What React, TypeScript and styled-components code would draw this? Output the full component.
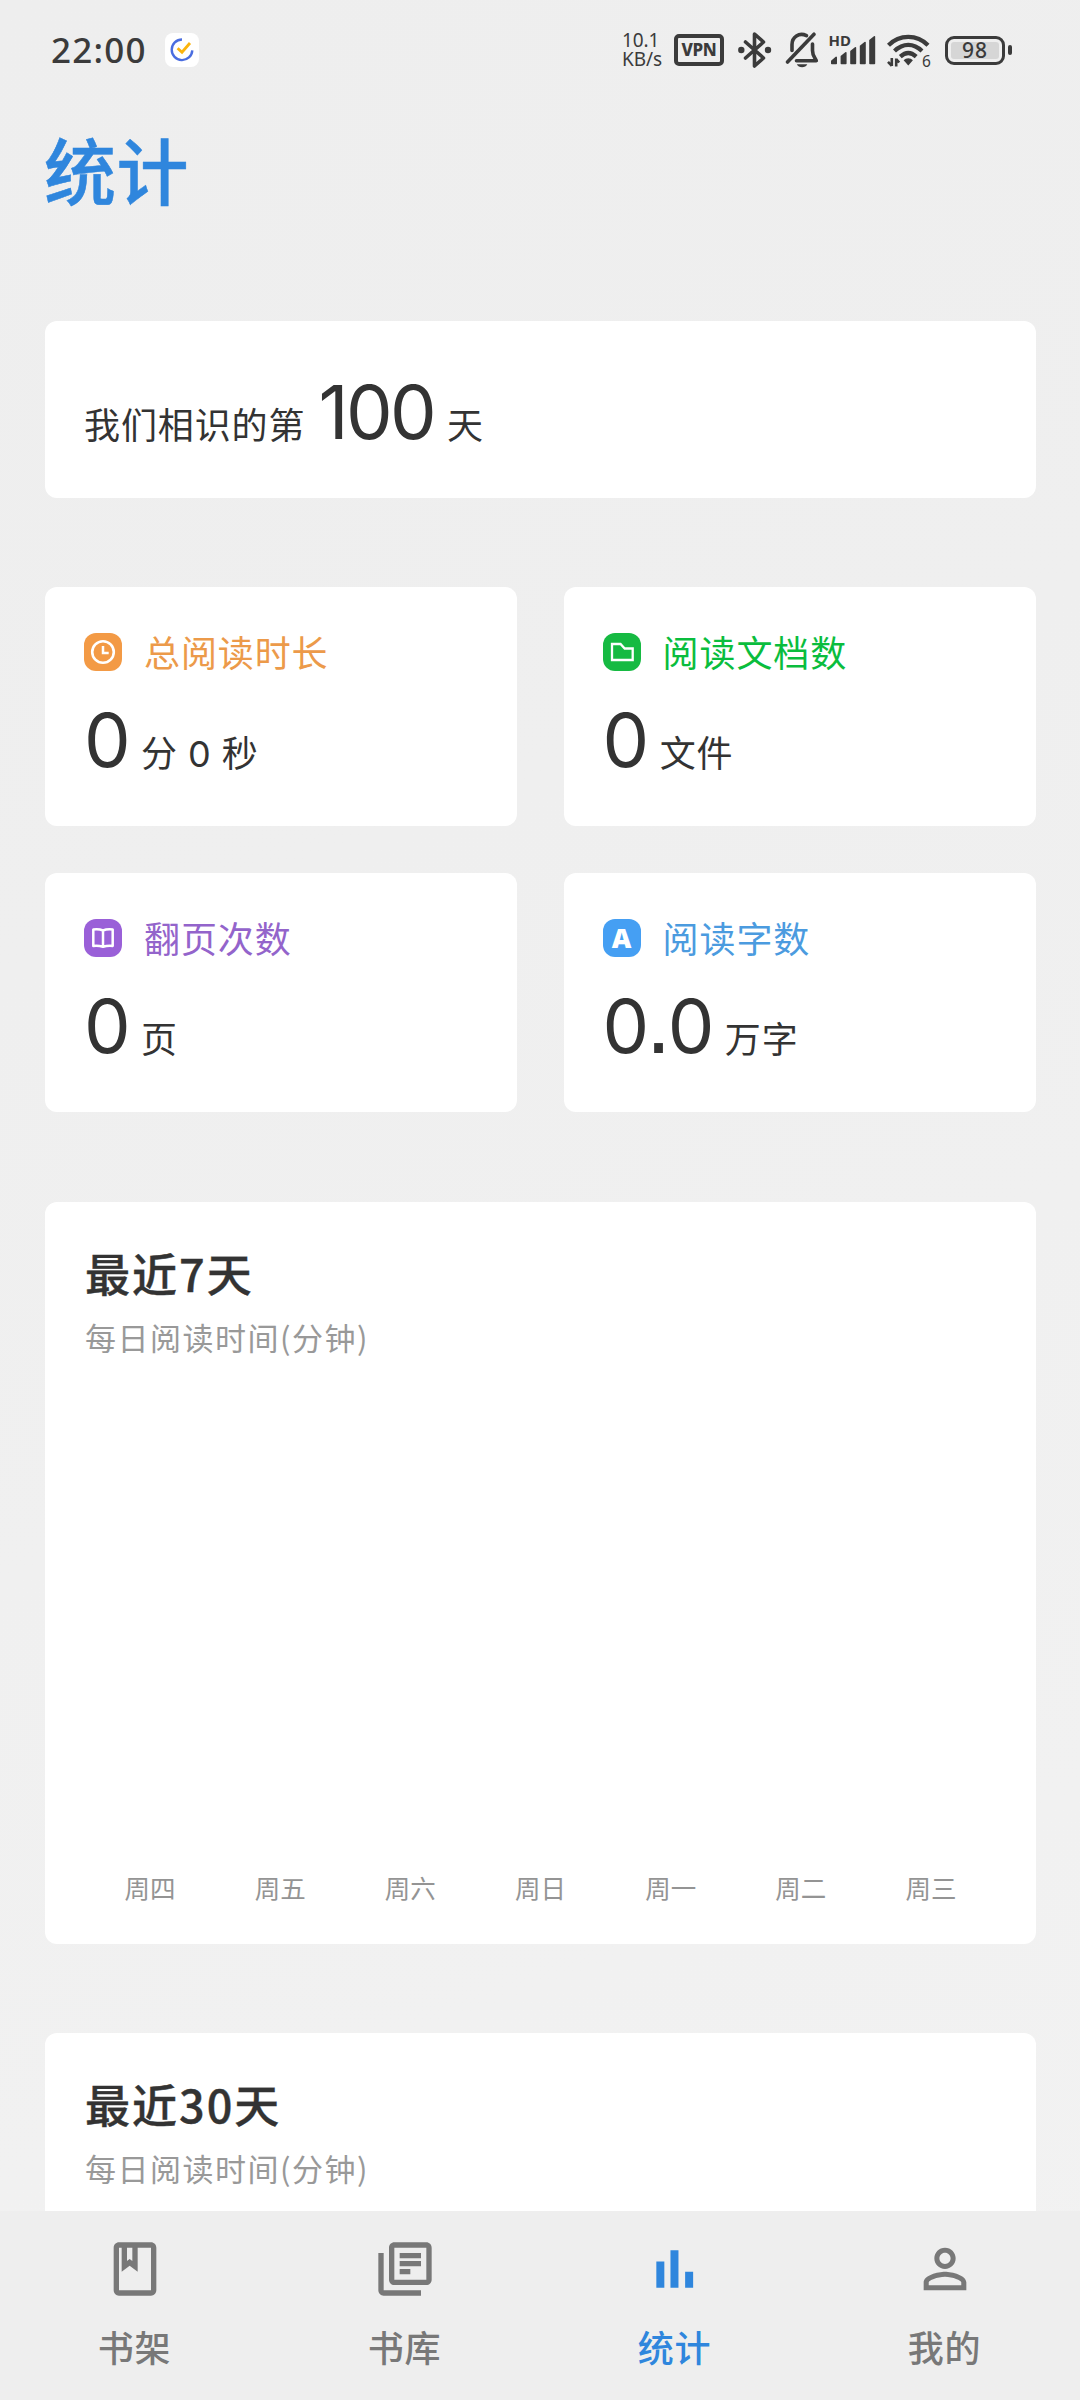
import React from "react";
import styled, { createGlobalStyle } from "styled-components";

const CJK = `"Noto Sans CJK SC", sans-serif`;
const LATIN = `"Noto Sans", "Noto Sans CJK SC", sans-serif`;
const NUMERIC = `Inter, "Noto Sans", sans-serif`;
const INK = "#3b3b3b";

const GlobalStyle = createGlobalStyle`
  *, *::before, *::after { box-sizing: border-box; }
  html, body { margin: 0; padding: 0; }
  body { width: 1080px; height: 2400px; overflow: hidden; }
  svg { display: block; flex: none; }
`;

const Screen = styled.div`
  width: 1080px;
  height: 2400px;
  display: flex;
  flex-direction: column;
  overflow: hidden;
  background: linear-gradient(160deg, #eeeeee 0%, #efefef 35%, #f2f2f2 100%);
  font-family: ${CJK};
  color: #333;
`;

const StatusBar = styled.header`
  flex: none;
  height: 100px;
  padding: 0 68px 0 51px;
  display: flex;
  align-items: center;
  justify-content: space-between;
  font-family: ${LATIN};
  color: ${INK};
`;

const StatusGroup = styled.div<{ $gap: number }>`
  display: flex;
  align-items: center;
  gap: ${(p) => p.$gap}px;
`;

const Clock = styled.span`
  width: 96px;
  font-size: 35px;
  line-height: 36px;
  font-weight: 500;
  letter-spacing: 1.2px;
  white-space: nowrap;
`;

const Speed = styled.div`
  width: 42px;
  display: flex;
  flex-direction: column;
  font-size: 19px;
  line-height: 18.6px;
  letter-spacing: -0.1px;
  white-space: nowrap;
`;

const VpnBadge = styled.span`
  width: 50px;
  height: 32px;
  margin-left: 10px;
  border: 4px solid ${INK};
  border-radius: 5px;
  display: flex;
  align-items: center;
  justify-content: center;
  font-size: 17px;
  line-height: 24px;
  font-weight: 800;
  letter-spacing: -0.3px;
`;

const StatusIcon = styled.svg<{ $left: number }>`
  margin-left: ${(p) => p.$left}px;
  overflow: visible;
`;

const Battery = styled.span`
  width: 60px;
  height: 29px;
  margin-left: 13px;
  padding: 3px;
  border: 3px solid ${INK};
  border-radius: 9px;
  display: flex;
`;

const BatteryLevel = styled.span`
  flex: 1;
  display: flex;
  align-items: center;
  justify-content: center;
  border-radius: 3px;
  background: #d6d6d6;
  font-size: 21px;
  line-height: 17px;
  font-weight: 500;
  letter-spacing: 1px;
`;

const BatteryNub = styled.span`
  width: 4px;
  height: 10px;
  margin-left: 3px;
  border-radius: 2px;
  background: ${INK};
`;

const Content = styled.main`
  flex: 1;
  min-height: 0;
  overflow: hidden;
  padding: 18px 44px 0 45px;
  display: flex;
  flex-direction: column;
`;

const Title = styled.h1`
  margin: 0 0 103px -1px;
  flex: none;
  font-size: 72px;
  line-height: 100px;
  font-weight: 500;
  letter-spacing: 0.6px;
  color: #2f86dd;
  -webkit-text-stroke: 0.5px #2f86dd;
`;

const Card = styled.section`
  flex: none;
  border-radius: 12px;
  background: #fff;
`;

const DaysCard = styled(Card)`
  height: 177px;
  padding: 51px 39px 0;
`;

const StatGrid = styled.div`
  flex: none;
  margin: 89px 0 90px;
  display: grid;
  grid-template-columns: 472px 1fr;
  grid-auto-rows: 239px;
  gap: 47px 46.600px;
`;

const StatCard = styled(Card)`
  padding: 46px 39px 0;
`;

const StatHead = styled.div<{ $color: string }>`
  height: 38px;
  margin-bottom: 29px;
  display: flex;
  gap: 22px;
  font-size: 36px;
  line-height: 36px;
  letter-spacing: 0.9px;
  color: ${(p) => p.$color};
`;

const ValueRow = styled.div`
  height: 80px;
  display: flex;
  align-items: baseline;
  font-size: 36px;
  line-height: 80px;
  letter-spacing: 0.9px;
  white-space: pre;
`;

const Big = styled.span<{ $left?: number; $right?: number }>`
  margin-left: ${(p) => p.$left ?? 0}px;
  margin-right: ${(p) => p.$right ?? 13}px;
  font-family: ${NUMERIC};
  font-size: 74px;
  letter-spacing: -2.600px;
`;

const Point = styled.span`
  margin: 0 -1px;
  font-family: "Liberation Sans", sans-serif;
  font-size: 92px;
  line-height: 0;
`;

const Small = styled.span`
  margin: 0 11px 0 10px;
  font-family: ${NUMERIC};
  letter-spacing: 0;
`;

const ChartCard = styled(Card)`
  height: 742px;
  margin-bottom: 89px;
  padding: 41px 40px 37px;
  display: flex;
  flex-direction: column;
`;

const ChartTitle = styled.h2`
  margin: 0 0 14px;
  font-size: 45px;
  line-height: 60px;
  font-weight: 500;
  letter-spacing: 2px;
  -webkit-text-stroke: 0.4px #333;
`;

const ChartNote = styled.p`
  margin: 0;
  font-size: 31px;
  line-height: 40px;
  letter-spacing: 1.5px;
  color: #999;
`;

const Plot = styled.div`
  flex: 1;
`;

const Axis = styled.div`
  display: grid;
  grid-template-columns: repeat(7, 1fr);
  font-size: 25.5px;
  line-height: 40px;
  text-align: center;
  color: #949494;
`;

const Nav = styled.nav`
  flex: none;
  height: 189px;
  display: grid;
  grid-template-columns: repeat(4, 1fr);
  background: #eeeeee;
`;

const NavItem = styled.a<{ $active?: boolean }>`
  padding-top: 26px;
  display: flex;
  flex-direction: column;
  align-items: center;
  gap: 25px;
  font-size: 36px;
  line-height: 40px;
  font-weight: 500;
  letter-spacing: 0.8px;
  color: ${(p) => (p.$active ? "#2f86dd" : "#787878")};
`;

const NavLabel = styled.span`
  margin-right: 1px;
`;

const AppIcon = () => (
  <svg width="34" height="34" viewBox="0 0 34 34" fill="none">
    <rect width="34" height="34" rx="8" fill="#fff" />
    <path d="M17 6.500A10.300 10.300 0 1 0 27.300 17.400" stroke="#4a6de0" strokeWidth="2.400" />
    <path d="M12.600 15.200l4.400 4 8-9.200" stroke="#fbb40d" strokeWidth="2.800" />
  </svg>
);

const Bluetooth = () => (
  <StatusIcon $left={13} width="36" height="38" viewBox="0 0 36 38" fill="none" stroke={INK} strokeWidth="3.600" strokeLinejoin="round" strokeLinecap="round">
    <path d="M8.500 11l18 16-9 8V3l9 8L8.500 27" />
    <circle cx="4.300" cy="19" r="3.200" fill={INK} stroke="none" />
    <circle cx="31" cy="19" r="3.200" fill={INK} stroke="none" />
  </StatusIcon>
);

const MutedBell = () => (
  <StatusIcon $left={11} width="36" height="38" viewBox="0 0 36 38" fill="none" stroke={INK} strokeWidth="3.600" strokeLinecap="round" strokeLinejoin="round">
    <path d="M3.500 31L30 3.200" />
    <path d="M22.500 4.600C15 1 8 6 8 13.500V19.500" />
    <path d="M28.500 13V19.500c0 5.500 2.500 7 3.800 10.200H12.500" />
    <path d="M12.800 33.300h10.500c-1.500 4-9 4-10.500 0z" fill={INK} stroke="none" />
  </StatusIcon>
);

const HdSignal = () => (
  <StatusIcon $left={8} width="49" height="42" viewBox="0 -4 49 42" fill={INK} stroke={INK} strokeWidth="1.600" strokeLinejoin="round">
    <text x="0.500" y="12.500" fontSize="15" fontWeight="700" stroke="none">HD</text>
    <path d="M3.800 28l4.400-3.600V30.500H3.800z" />
    <path d="M13.400 23.400l4.400-3.600V30.500h-4.400z" />
    <path d="M23 18.400l4.400-3.600V30.500H23z" />
    <path d="M32.600 13.200l4.400-3.600V30.500h-4.400z" />
    <path d="M42 7.400l4.400-3.600V30.500H42z" />
  </StatusIcon>
);

const Wifi = () => (
  <StatusIcon $left={9} width="46" height="42" viewBox="0 -3 46 42" fill="none" stroke={INK} strokeWidth="4.200">
    <path d="M2.500 13.200C13.500 2 31 2 42 13.200" />
    <path d="M8.500 19C17 10.800 27.500 10.800 36 19" />
    <path d="M14.300 24.600C19.500 19.800 25 19.800 30.200 24.600" />
    <path d="M17.600 28.200c2.500-2.700 6.800-2.700 9.300 0L22.300 33.500z" fill={INK} stroke="none" />
    <path d="M5.800 26v8M10.200 34.500v-8M2 29.800l3.800 4M10.200 27l3 3.500" strokeWidth="2.600" />
    <text x="36" y="34.500" fontSize="15.500" fill={INK} stroke="none">6</text>
  </StatusIcon>
);

const ClockIcon = () => (
  <svg width="38" height="38" viewBox="0 0 38 38" fill="none">
    <rect width="38" height="38" rx="12" fill="#f39a45" />
    <circle cx="19" cy="19" r="10.800" stroke="#fff" strokeWidth="2.600" />
    <path d="M19 13v7h5.700" stroke="#fff" strokeWidth="2.500" />
  </svg>
);

const FolderIcon = () => (
  <svg width="38" height="38" viewBox="0 0 38 38" fill="none">
    <rect width="38" height="38" rx="12" fill="#16ba42" />
    <path d="M9 11h8.500l4.200 4.500h8V27H9z" stroke="#fff" strokeWidth="2.300" />
  </svg>
);

const BookIcon = () => (
  <svg width="38" height="38" viewBox="0 0 38 38" fill="none">
    <rect width="38" height="38" rx="12" fill="#9a60d8" />
    <path d="M19 11.500c-3-1.400-6.500-1.500-9.700-1.100v16.500c3.200-.3 6.700-.1 9.700.9 3-1 6.500-1.200 9.700-.9V10.400c-3.200-.4-6.700-.3-9.700 1.100zM19 11.500v16" stroke="#fff" strokeWidth="2.500" strokeLinejoin="round" />
  </svg>
);

const LetterTile = styled.span`
  flex: none;
  width: 38px;
  height: 38px;
  border-radius: 12px;
  background: #459ff3;
  color: #fff;
  font-family: "Open Sans", "Noto Sans", sans-serif;
  font-size: 27px;
  font-weight: 800;
  line-height: 37px;
  letter-spacing: 0;
  text-align: center;
`;

const stats = [
  { icon: <ClockIcon />, label: "总阅读时长", color: "#ec9a4a", value: "0", unit: "分", extra: "0", extraUnit: "秒" },
  { icon: <FolderIcon />, label: "阅读文档数", color: "#0abd3d", value: "0", unit: "文件" },
  { icon: <BookIcon />, label: "翻页次数", color: "#9364cb", value: "0", unit: "页" },
  { icon: <LetterTile>A</LetterTile>, label: "阅读字数", color: "#4b9bdf", value: "0.0", unit: "万字" },
];

const weekdays = ["周四", "周五", "周六", "周日", "周一", "周二", "周三"];

const tabs = [
  {
    label: "书架",
    path: "M18 2H6c-1.100 0-2 .9-2 2v16c0 1.100.9 2 2 2h12c1.100 0 2-.9 2-2V4c0-1.100-.9-2-2-2zM9 4h2v5l-1-.75L9 9V4zm9 16H6V4h1v9l3-2.250L13 13V4h5v16z",
  },
  {
    label: "书库",
    path: "M4 6H2v14c0 1.100.9 2 2 2h14v-2H4V6zm16-4H8c-1.100 0-2 .9-2 2v12c0 1.100.9 2 2 2h12c1.100 0 2-.9 2-2V4c0-1.100-.9-2-2-2zm0 14H8V4h12v12zM10 9h8v2h-8zm0 3h4v2h-4zm0-6h8v2h-8z",
  },
  { label: "统计", active: true, path: "M5 9.200h3V19H5zM10.300 5h3v14h-3zm5.500 8h3v6h-3z" },
  {
    label: "我的",
    path: "M12 5.900c1.160 0 2.100.94 2.100 2.100s-.94 2.100-2.100 2.100S9.900 9.160 9.900 8s.94-2.100 2.100-2.100m0 9c2.970 0 6.100 1.460 6.100 2.100v1.100H5.900V17c0-.64 3.130-2.100 6.100-2.100M12 4C9.790 4 8 5.790 8 8s1.790 4 4 4 4-1.790 4-4-1.790-4-4-4zm0 9c-2.670 0-8 1.340-8 4v3h16v-3c0-2.660-5.330-4-8-4z",
  },
];

const BigNumber = ({ value }: { value: string }) => {
  const [whole, fraction] = value.split(".");
  return (
    <Big>
      {whole}
      {fraction !== undefined && <Point>.</Point>}
      {fraction}
    </Big>
  );
};

export default function App() {
  return (
    <>
      <GlobalStyle />
      <Screen>
        <StatusBar>
          <StatusGroup $gap={18}>
            <Clock>22:00</Clock>
            <AppIcon />
          </StatusGroup>
          <StatusGroup $gap={0}>
            <Speed>
              <span>10.1</span>
              <span>KB/s</span>
            </Speed>
            <VpnBadge>VPN</VpnBadge>
            <Bluetooth />
            <MutedBell />
            <HdSignal />
            <Wifi />
            <Battery>
              <BatteryLevel>98</BatteryLevel>
            </Battery>
            <BatteryNub />
          </StatusGroup>
        </StatusBar>

        <Content>
          <Title>统计</Title>

          <DaysCard>
            <ValueRow>
              我们相识的第
              <Big $left={13}>100</Big>
              天
            </ValueRow>
          </DaysCard>

          <StatGrid>
            {stats.map((s) => (
              <StatCard key={s.label}>
                <StatHead $color={s.color}>
                  {s.icon}
                  <span>{s.label}</span>
                </StatHead>
                <ValueRow>
                  <BigNumber value={s.value} />
                  {s.unit}
                  {s.extra && <Small>{s.extra}</Small>}
                  {s.extraUnit}
                </ValueRow>
              </StatCard>
            ))}
          </StatGrid>

          <ChartCard>
            <ChartTitle>最近7天</ChartTitle>
            <ChartNote>每日阅读时间(分钟)</ChartNote>
            <Plot />
            <Axis>
              {weekdays.map((d) => (
                <span key={d}>{d}</span>
              ))}
            </Axis>
          </ChartCard>

          <ChartCard>
            <ChartTitle>最近30天</ChartTitle>
            <ChartNote>每日阅读时间(分钟)</ChartNote>
          </ChartCard>
        </Content>

        <Nav>
          {tabs.map((t) => (
            <NavItem key={t.label} $active={t.active}>
              <svg width="64" height="64" viewBox="0 0 24 24" fill="currentColor">
                <path d={t.path} />
              </svg>
              <NavLabel>{t.label}</NavLabel>
            </NavItem>
          ))}
        </Nav>
      </Screen>
    </>
  );
}
